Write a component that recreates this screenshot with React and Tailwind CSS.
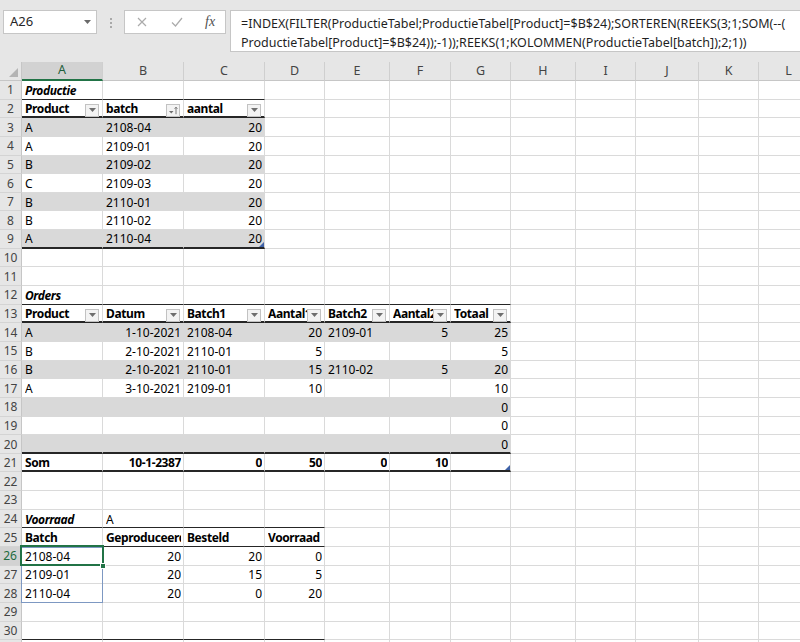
import clsx from "clsx";

// column letters with their widths on screen
const COLS = [
  ["A", "w-[81px]"],
  ["B", "w-[81px]"],
  ["C", "w-[81px]"],
  ["D", "w-[60px]"],
  ["E", "w-[65px]"],
  ["F", "w-[61px]"],
  ["G", "w-[60px]"],
  ["H", "w-[65px]"],
  ["I", "w-[60px]"],
  ["J", "w-[63px]"],
  ["K", "w-[60px]"],
  ["L", "w-[60px]"],
];

const productie = [
  ["A", "2108-04"],
  ["A", "2109-01"],
  ["B", "2109-02"],
  ["C", "2109-03"],
  ["B", "2110-01"],
  ["B", "2110-02"],
  ["A", "2110-04"],
];

const orders = [
  ["A", "1-10-2021", "2108-04", "20", "2109-01", "5", "25"],
  ["B", "2-10-2021", "2110-01", "5", "", "", "5"],
  ["B", "2-10-2021", "2110-01", "15", "2110-02", "5", "20"],
  ["A", "3-10-2021", "2109-01", "10", "", "", "10"],
  ["", "", "", "", "", "", "0"],
  ["", "", "", "", "", "", "0"],
  ["", "", "", "", "", "", "0"],
];

const voorraad = [
  ["2108-04", "20", "20", "0"],
  ["2109-01", "20", "15", "5"],
  ["2110-04", "20", "0", "20"],
];

// dark table lines under a row: [number of columns, thickness]
const LINES = {
  1: [3, 1],
  2: [3, 2],
  9: [3, 2],
  12: [7, 1],
  13: [7, 2],
  20: [7, 2],
  21: [7, 2],
  24: [4, 1],
  25: [4, 1],
  30: [4, 1],
};

function buildSheet() {
  const rows = Array.from({ length: 31 }, () =>
    COLS.map(() => ({ v: "" })),
  );
  const put = (r, c, v, o = {}) => Object.assign(rows[r - 1][c], { v, ...o });
  const band = (r, to) => {
    for (let c = 0; c < to; c++) rows[r - 1][c].g = true;
  };

  // Productie
  put(1, 0, "Productie", { b: true, i: true });
  ["Product", "batch", "aantal"].forEach((h, c) =>
    put(2, c, h, { b: true, f: c === 1 ? "sort" : "filter" }),
  );
  productie.forEach(([p, batch], i) => {
    const r = 3 + i;
    put(r, 0, p);
    put(r, 1, batch);
    put(r, 2, "20", { r: true });
    if (i % 2 === 0) band(r, 3);
  });
  rows[8][2].handle = true;

  // Orders
  put(12, 0, "Orders", { b: true, i: true });
  ["Product", "Datum", "Batch1", "Aantal1", "Batch2", "Aantal2", "Totaal"].forEach(
    (h, c) => put(13, c, h, { b: true, f: "filter" }),
  );
  orders.forEach((line, i) => {
    const r = 14 + i;
    line.forEach((v, c) => put(r, c, v, { r: [1, 3, 5, 6].includes(c) }));
    if (i % 2 === 0) band(r, 7);
  });
  ["Som", "10-1-2387", "0", "50", "0", "10", ""].forEach((v, c) =>
    put(21, c, v, { b: true, r: c > 0 }),
  );
  rows[20][6].handle = true;

  // Voorraad
  put(24, 0, "Voorraad", { b: true, i: true });
  put(24, 1, "A");
  ["Batch", "Geproduceerd", "Besteld", "Voorraad"].forEach((h, c) =>
    put(25, c, h, { b: true }),
  );
  voorraad.forEach((line, i) => {
    line.forEach((v, c) => put(26 + i, c, v, { r: c > 0 }));
  });
  rows[25][0].sel = true;

  return rows;
}

const sheet = buildSheet();

function FilterButton({ sort }) {
  return (
    <span className="absolute right-[3px] top-[4px] w-[14px] h-[13px] border border-[#c2c2c2] bg-[#f3f3f3] flex items-center justify-center">
      {sort ? (
        <svg width="10" height="9" viewBox="0 0 10 9">
          <path d="M1 5h4.5L3.25 7.5z" fill="#6e6e6e" />
          <path d="M8 1.2v7" stroke="#6e6e6e" strokeWidth="0.9" />
          <path d="M6.6 2.8L8 1.2 9.4 2.8" fill="none" stroke="#6e6e6e" strokeWidth="0.9" />
        </svg>
      ) : (
        <svg width="7" height="4" viewBox="0 0 7 4">
          <path d="M0 0h7L3.5 4z" fill="#6e6e6e" />
        </svg>
      )}
    </span>
  );
}

function Cell({ cell, width, line }) {
  return (
    <div
      className={clsx(
        "relative h-full shrink-0 flex items-center border-r pl-[3px] pr-[2px] pt-[2px] whitespace-nowrap",
        width,
        cell.g ? "bg-[#d9d9d9] border-r-[#d9d9d9]" : "bg-white border-r-[#dadada]",
        line === 2 && "border-b-2 border-b-[#262626]",
        line === 1 && "border-b border-b-[#262626]",
        !line && (cell.g ? "border-b border-b-[#d9d9d9]" : "border-b border-b-[#dadada]"),
        cell.b && "font-bold tracking-[-0.4px]",
        cell.i && "italic",
      )}
    >
      <span
        className={clsx(
          "block w-full overflow-hidden",
          cell.r ? "text-right" : "text-left",
        )}
      >
        {cell.v}
      </span>
      {cell.f && <FilterButton sort={cell.f === "sort"} />}
      {cell.handle && (
        <span className="absolute right-0 bottom-0 w-0 h-0 border-l-[5px] border-l-transparent border-b-[5px] border-b-[#3f62a8]" />
      )}
      {cell.sel && (
        <>
          {/* spill range A26:A28 */}
          <span className="absolute z-10 left-[-1px] top-0 w-[82px] h-[56px] border border-[#7d98c2] pointer-events-none" />
          {/* active cell */}
          <span className="absolute z-20 left-[-2px] top-[-2px] w-[84px] h-[21px] border-2 border-[#217346] pointer-events-none" />
          <span className="absolute z-20 right-[-4px] bottom-[-4px] w-[6px] h-[6px] bg-[#217346] border border-white" />
        </>
      )}
    </div>
  );
}

function Toolbar() {
  return (
    <div className="h-[62px] shrink-0 bg-[#e6e6e6] flex items-start pt-[10px] text-[13px] text-[#262626]">
      {/* name box */}
      <div className="ml-[3px] w-[94px] h-[24px] shrink-0 bg-white border border-[#c6c6c6] flex items-center justify-between pl-[6px] pr-[5px]">
        <span>A26</span>
        <svg width="7" height="4" viewBox="0 0 7 4">
          <path d="M0 0h7L3.5 4z" fill="#6a6a6a" />
        </svg>
      </div>

      {/* grip */}
      <div className="ml-[13px] mt-[8px] flex flex-col gap-[2px]">
        <span className="w-[2px] h-[2px] bg-[#a9a9a9]" />
        <span className="w-[2px] h-[2px] bg-[#a9a9a9]" />
        <span className="w-[2px] h-[2px] bg-[#a9a9a9]" />
      </div>

      {/* cancel / enter / insert function */}
      <div className="ml-[12px] w-[102px] h-[24px] shrink-0 bg-white border border-[#c6c6c6] flex items-center">
        <svg className="ml-[12px]" width="10" height="10" viewBox="0 0 10 10">
          <path d="M1 1l8 8M9 1l-8 8" stroke="#ababab" strokeWidth="1.2" />
        </svg>
        <svg className="ml-[24px]" width="12" height="10" viewBox="0 0 12 10">
          <path d="M1 5.5l3.5 3.5L11 1" fill="none" stroke="#ababab" strokeWidth="1.2" />
        </svg>
        <span className="ml-[22px] font-['Liberation_Serif',serif] italic text-[14px] text-[#505050] leading-none">
          fx
        </span>
      </div>

      {/* formula bar */}
      <div className="ml-[4px] -mr-px flex-1 h-[42px] bg-white border border-[#c6c6c6] pl-[10px] pt-[3px] text-[12.5px] leading-[19px] text-[#1f1f1f]">
        <div className="whitespace-nowrap">
          =INDEX(FILTER(ProductieTabel;ProductieTabel[Product]=$B$24);SORTEREN(REEKS(3;1;SOM(--(
        </div>
        <div className="whitespace-nowrap">
          ProductieTabel[Product]=$B$24));-1));REEKS(1;KOLOMMEN(ProductieTabel[batch]);2;1))
        </div>
      </div>
    </div>
  );
}

function ColumnHeaders() {
  return (
    <div className="h-[19px] shrink-0 flex bg-[#e6e6e6] text-[12.5px] text-[#444]">
      <div className="relative w-[22px] h-full shrink-0 border-r border-b border-[#c6c6c6]">
        <svg className="absolute right-[3px] bottom-[3px]" width="9" height="9" viewBox="0 0 9 9">
          <path d="M9 0V9H0z" fill="#b4b4b4" />
        </svg>
      </div>
      {COLS.map(([letter, w]) => (
        <div
          key={letter}
          className={clsx(
            "h-full shrink-0 flex items-center justify-center border-r border-r-[#cfcfcf]",
            w,
            letter === "A"
              ? "bg-[#d2d2d2] text-[#1e5e3a] border-b-2 border-b-[#217346]"
              : "border-b border-b-[#c6c6c6]",
          )}
        >
          {letter}
        </div>
      ))}
    </div>
  );
}

export default function App() {
  return (
    <div className="w-[800px] h-[642px] overflow-hidden flex flex-col bg-white font-['Noto_Sans',sans-serif]">
      <Toolbar />
      <ColumnHeaders />

      <div className="flex flex-col text-[12px] text-black">
        {sheet.map((cells, i) => {
          const rowNo = i + 1;
          const line = LINES[rowNo];
          const active = rowNo === 26;
          return (
            <div key={rowNo} className="h-[18.65px] shrink-0 flex">
              <div
                className={clsx(
                  "w-[22px] h-full shrink-0 flex items-center justify-center pt-[1px] border-b border-b-[#d4d4d4] text-[12px]",
                  active
                    ? "bg-[#d2d2d2] text-[#1e6b40] border-r-2 border-r-[#217346]"
                    : "bg-[#e6e6e6] text-[#444] border-r border-r-[#c6c6c6]",
                )}
              >
                {/* row 31 only peeks in at the bottom edge */}
                {rowNo <= 30 ? rowNo : ""}
              </div>
              {cells.map((cell, c) => (
                <Cell
                  key={c}
                  cell={cell}
                  width={COLS[c][1]}
                  line={line && c < line[0] ? line[1] : 0}
                />
              ))}
            </div>
          );
        })}
      </div>
    </div>
  );
}
